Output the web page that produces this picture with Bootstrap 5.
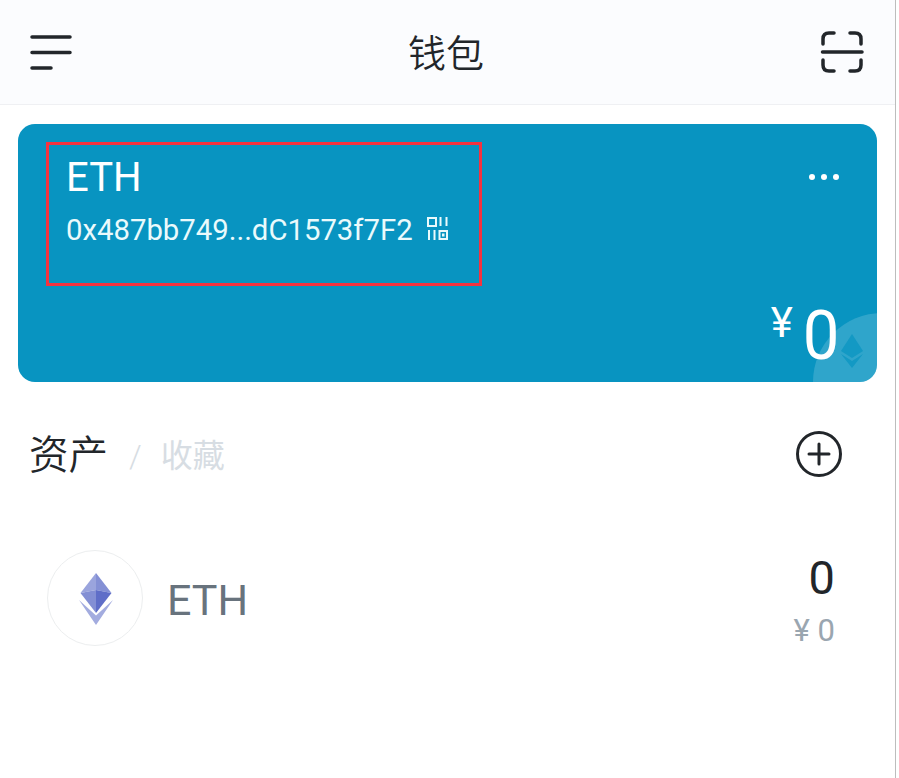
<!DOCTYPE html>
<html lang="zh">
<head>
<meta charset="utf-8">
<title>钱包</title>
<link href="https://cdn.jsdelivr.net/npm/bootstrap@5.3.0/dist/css/bootstrap.min.css" rel="stylesheet">
<style>
html,body{height:100%;background:#fff;}
body{font-family:Roboto,"Noto Sans CJK SC",sans-serif;overflow:hidden;}
.shell{width:896px;height:778px;border-right:1px solid #bdbdbd;}
.topbar{height:105px;background:#fbfcfe;border-bottom:1px solid #eff0f3;padding:0 31px 0 30px;}
.topbar-title{font-size:38px;line-height:1;color:#22262a;padding-top:4px;font-weight:350;}
.wallet{margin:19px 18px 0;height:258px;background:#0894c1;border-radius:17px;color:#fff;overflow:hidden;padding:18px 28px 0;}
.selbox{width:436px;height:144px;border:3px solid #f5333f;padding:9px 17px;flex:none;}
.wname{font-size:40px;line-height:48px;}
.waddr{font-size:29.300px;line-height:32px;margin-top:12px;color:#eafafc;}
.qrmark{margin-left:14px;margin-bottom:3px;flex:none;}
.dots{top:49px;right:38px;}
.wtotal{right:37px;bottom:12px;line-height:1;}
.yen{font-size:42px;margin-right:9px;position:relative;top:-26px;}
.amount{font-size:68px;font-weight:400;transform:scaleX(.96);}
.wm{right:-74px;bottom:-69px;width:138px;height:138px;border-radius:50%;background:rgba(255,255,255,.16);}
.sect{padding:0 53px 0 29px;margin-top:47px;height:54px;}
.tab-on{font-size:39.500px;color:#22262a;line-height:1;font-weight:350;}
.tab-sep{font-size:32px;color:#d7dde3;margin:0 19px 0 21px;line-height:1;font-weight:300;}
.tab-off{font-size:32px;color:#d7dde3;line-height:1;}
.plus{margin-bottom:4px;}
.asset{margin-top:63px;padding:0 60px 0 47px;height:104px;}
.coin{width:96px;height:96px;border:1px solid #eceeef;border-radius:50%;flex:none;padding:2px 0 0 2px;}
.aname{font-size:43px;color:#68737d;margin-left:24px;line-height:1;padding-top:4px;}
.qty{font-size:47px;line-height:54px;color:#22262a;padding-top:3px;}
.fiat{font-size:31px;line-height:36px;color:#9aa6b0;margin-top:8px;}
</style>
</head>
<body>
<div class="shell">
  <header class="topbar d-flex align-items-center justify-content-between">
    <svg width="42" height="38" viewBox="0 0 42 38" fill="none" stroke="#22262a" stroke-width="3.500" stroke-linecap="round"><path d="M2 4H40M2 19.500H40M2 35H21"/></svg>
    <div class="topbar-title">钱包</div>
    <svg width="44" height="44" viewBox="0 0 44 44" fill="none" stroke="#22262a" stroke-width="3.500" stroke-linecap="round" stroke-linejoin="round"><path d="M14 3H9Q3 3 3 9V14M30 3H35Q41 3 41 9V14M2.500 22H42M3 30V35Q3 41 9 41H14M41 30V35Q41 41 35 41H30"/></svg>
  </header>

  <section class="wallet position-relative">
    <div class="selbox">
      <div class="wname">ETH</div>
      <div class="waddr d-flex align-items-center">0x487bb749...dC1573f7F2
        <svg class="qrmark" width="21" height="23" viewBox="0 0 21 23" fill="none" stroke="#eafafc" stroke-width="2"><rect x="1" y="1" width="8" height="8"/><path d="M13.500 0V9M19.500 0V9M2 13V23M7.500 13V23"/><rect x="12.500" y="14" width="7.500" height="8"/><rect x="15" y="16.500" width="2.500" height="3" fill="#eafafc" stroke="none"/></svg>
      </div>
    </div>
    <svg class="dots position-absolute" width="30" height="8" viewBox="0 0 30 8" fill="#fff"><circle cx="3" cy="4" r="3"/><circle cx="15" cy="4" r="3"/><circle cx="27" cy="4" r="3"/></svg>
    <div class="wm position-absolute"></div>
    <svg class="position-absolute" style="right:14px;bottom:14px" width="22" height="34" viewBox="0 0 22 34" fill="#0894c1" fill-opacity=".72"><path d="M11 0L22 17L11 24L0 17Z"/><path d="M0 20L11 27L22 20L11 34Z"/></svg>
    <div class="wtotal position-absolute d-flex align-items-end"><span class="yen">¥</span><span class="amount">0</span></div>
  </section>

  <section class="sect d-flex align-items-center">
    <span class="tab-on">资产</span><span class="tab-sep">/</span><span class="tab-off">收藏</span>
    <svg class="ms-auto plus" width="46" height="46" viewBox="0 0 46 46" fill="none" stroke="#22262a" stroke-linecap="round"><circle cx="23" cy="23" r="21.500" stroke-width="3"/><path d="M13 23H33M23 13V33" stroke-width="3"/></svg>
  </section>

  <section class="asset d-flex align-items-center">
    <div class="coin d-flex align-items-center justify-content-center">
      <svg width="34" height="52" viewBox="0 0 34 52"><path d="M17 0L1.500 20L17 17Z" fill="#9aa4dd"/><path d="M17 0L32.500 20L17 17Z" fill="#8490d5"/><path d="M1.500 20L17 17V40Z" fill="#838fd4"/><path d="M32.500 20L17 17V40Z" fill="#5f6ec8"/><path d="M0 27L17 42.500L34 27L17 52Z" fill="#a3acdf"/></svg>
    </div>
    <span class="aname">ETH</span>
    <div class="ms-auto text-end">
      <div class="qty">0</div>
      <div class="fiat">¥ 0</div>
    </div>
  </section>
</div>
<script src="https://cdn.jsdelivr.net/npm/bootstrap@5.3.0/dist/js/bootstrap.bundle.min.js"></script>
</body>
</html>
